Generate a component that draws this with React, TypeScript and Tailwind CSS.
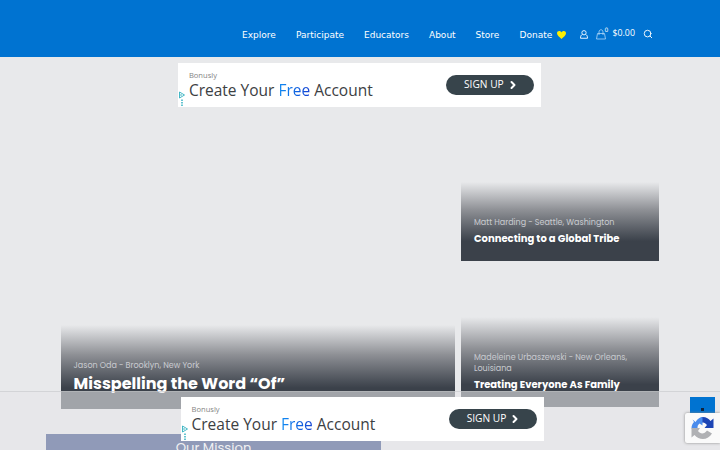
import { ChevronRight, Search } from "lucide-react"

const links = [
  { label: "Explore", width: "w-[54px]" },
  { label: "Participate", width: "w-[68px]" },
  { label: "Educators", width: "w-[65px]" },
  { label: "About", width: "w-[46.500px]" },
  { label: "Store", width: "w-[44px]" },
  { label: "Donate", width: "w-[37px]" },
]

function Header() {
  return (
    <header className="flex h-[57px] items-start bg-[#0073d1] pt-[27px] pl-[242px] font-['DejaVu_Sans',sans-serif] text-[9px] leading-[16px] text-white">
      <nav className="flex">
        {links.map((link) => (
          <a key={link.label} href="#" className={`${link.width} shrink-0 whitespace-nowrap`}>
            {link.label}
          </a>
        ))}
      </nav>
      <svg className="mt-[4px] h-[8px] w-[9px]" viewBox="0 0 18 16" fill="#ffee00">
        <path d="M9 16C5 12 0 9 0 4.500C0 1.500 2 0 4.500 0C6.500 0 8.200 1 9 3C9.800 1 11.500 0 13.500 0C16 0 18 1.500 18 4.500C18 9 13 12 9 16Z" />
      </svg>
      <svg className="mt-[3px] ml-[14px] h-[9px] w-[8px]" viewBox="0 0 16 18" fill="none" stroke="#e3f1ff" strokeWidth="2">
        <circle cx="8" cy="5.500" r="4.300" />
        <path d="M5 9C2 10 1 12 1 16.500H15C15 12 14 10 11 9" />
      </svg>
      <svg className="mt-[2px] ml-[8px] h-[11px] w-[10px]" viewBox="0 0 20 22" fill="none" stroke="#b9dcfa" strokeWidth="1.500">
        <path d="M3 9H17L19 20H1Z" />
        <path d="M6 12V6C6 0 14 0 14 6V12" />
      </svg>
      <span className="-mt-[2px] -ml-[1px] w-[8px] text-[6px] leading-[10px]">0</span>
      <span className="-mt-[2px] w-[32px] font-['Open_Sans','Noto_Sans',sans-serif] text-[8.800px]">$0.00</span>
      <Search className="mt-[2px] -ml-[2px] h-[10px] w-[10px]" strokeWidth={2.2} />
    </header>
  )
}

function Ad() {
  return (
    <div className="flex h-[44px] w-[363px] bg-white font-['Open_Sans','Noto_Sans',sans-serif]">
      <svg className="mt-[28px] ml-px h-[16px] w-[6px]" viewBox="0 0 12 32" fill="none" stroke="#16a6b8" strokeWidth="1.600">
        <path d="M1 2L11 8L1 14Z" />
        <path d="M4 6V10" />
        <path d="M6 17V20M6 22V25M6 27V30" strokeWidth="2.600" />
      </svg>
      <div className="ml-[3.500px] w-[257px] whitespace-nowrap">
        <p className="mt-[7px] text-[7.600px] leading-[11px] text-[#858585]">Bonusly</p>
        <p className="text-[15.500px] leading-[18px] text-[#3c4043]">
          Create Your{" "}
          <span className="bg-linear-to-r from-[#138cf3] to-[#1742d3] bg-clip-text text-transparent">Free</span> Account
        </p>
      </div>
      <div className="mt-[12px] flex h-[20px] w-[88px] items-center justify-center gap-[3px] rounded-full bg-[#37444b] pl-[3px] text-[10.200px] text-white">
        <span className="whitespace-nowrap">SIGN UP</span>
        <ChevronRight className="h-[12px] w-[12px]" strokeWidth={4} />
      </div>
    </div>
  )
}

function Story({ size, author, title, large }: { size: string; author: string; title: string; large?: boolean }) {
  return (
    <article
      className={`${size} flex flex-col bg-linear-to-b from-transparent via-[#8f9196] via-35% to-[#3b414a] to-75% pl-[12.600px] font-['Poppins','Inter',sans-serif]`}
    >
      <p className="text-[8px] leading-[11px] whitespace-pre-line text-[#c9cbd0]">{author}</p>
      <h2
        className={
          large
            ? "mt-[3px] text-[16px] leading-[20px] font-bold whitespace-nowrap text-white"
            : "mt-[4px] text-[10px] leading-[14px] font-bold whitespace-nowrap text-white"
        }
      >
        {title}
      </h2>
    </article>
  )
}

function RecaptchaLogo() {
  return (
    <svg className="h-[24px] w-[23px]" viewBox="0 0 46 48">
      <path d="M45 5V24H27L32 18C28 13 23 13 21 13V2C29 1 36 5 39 10Z" fill="#1c45b5" />
      <path d="M3 7L9 12C13 5 19 2 23 2V19L17 15C13 18 13 21 13 25H1C1 19 3 15 6 12Z" fill="#4a8cec" />
      <path d="M1 24H18L14 30C19 37 27 36 32 29L42 35C35 48 17 50 7 38L1 43Z" fill="#b0b1b4" />
    </svg>
  )
}

export default function App() {
  return (
    <div className="relative h-[450px] w-[720px] overflow-hidden bg-[#e8e9eb]">
      <Header />
      <div className="mt-[6px] ml-[178.400px]">
        <Ad />
      </div>

      {/* Featured stories */}
      <main className="mt-[75px] ml-[61px] flex items-start gap-[6px]">
        <Story
          large
          size="mt-[143px] h-[84px] w-[394.400px] pt-[35px]"
          author="Jason Oda - Brooklyn, New York"
          title="Misspelling the Word “Of”"
        />
        <div className="flex w-[197.600px] flex-col gap-[56px]">
          <Story size="h-[79px] pt-[35px]" author="Matt Harding - Seattle, Washington" title="Connecting to a Global Tribe" />
          <Story
            size="h-[90px] pt-[35px]"
            author={"Madeleine Urbaszewski - New Orleans,\nLouisiana"}
            title="Treating Everyone As Family"
          />
        </div>
      </main>

      <section className="mt-[25px] ml-[46px] h-[40px] w-[335px] bg-[#0f2a6e] pt-[5px] text-center font-['Poppins','Inter',sans-serif] text-[13.200px] leading-[17px] text-white">
        Our Mission
      </section>

      {/* Sticky footer ad */}
      <div className="absolute inset-x-0 top-[391px] h-[59px] border-t border-[#c0c1c4]/50 bg-[#e6e6e9]/60 pt-[5px] pl-[181px]">
        <Ad />
      </div>

      {/* Back to top */}
      <button className="absolute top-[397px] left-[690px] flex h-[24px] w-[25px] items-center justify-center bg-[#0073d1]">
        <span className="mt-px h-[3px] w-[3px] bg-[#10233c]"></span>
      </button>
      <div className="absolute top-[413px] left-[685px] flex h-[30px] w-[35px] items-center rounded-l-[2px] bg-[#fafafa] pl-[6px] shadow-[0_0_3px_#888888]">
        <RecaptchaLogo />
      </div>
    </div>
  )
}
